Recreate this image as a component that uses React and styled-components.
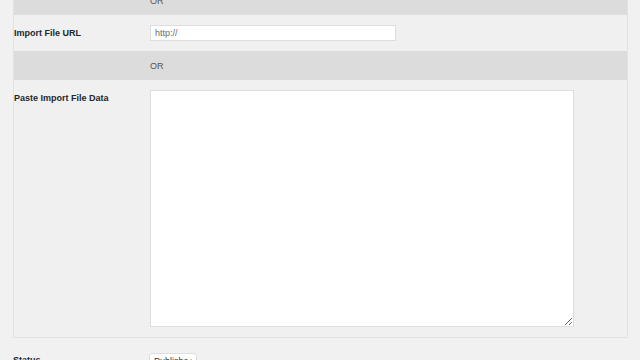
import React from 'react';
import styled, { createGlobalStyle } from 'styled-components';

const Global = createGlobalStyle`
  html, body {
    margin: 0;
    padding: 0;
    background: #f1f1f1;
    font-family: "Liberation Sans", Arial, sans-serif;
    color: #23282d;
    overflow: hidden;
  }
`;

const Page = styled.div`
  padding-left: 13px;
  width: 640px;
  height: 360px;
  box-sizing: border-box;
  overflow: hidden;
`;

const Panel = styled.div`
  width: 615px;
  margin-top: -15px;
  border: 1px solid #e2e2e2;
  background: #f0f0f0;
  box-sizing: border-box;
`;

const Band = styled.div`
  height: 29px;
  background: #dcdcdc;
  display: grid;
  grid-template-columns: 136px 1fr;
  align-items: center;
  font-size: 9px;
  color: #555;
  span { grid-column: 2; }
`;

const Row = styled.div`
  display: grid;
  grid-template-columns: 136px 1fr;
  align-items: ${p => (p.$top ? 'start' : 'center')};
  padding: 10px 0;
`;

const Field = styled.div`
  display: flex;
`;

const Label = styled.label`
  font-size: 9px;
  font-weight: bold;
  line-height: 11px;
  padding-top: ${p => p.$pad || 0}px;
`;

const TextInput = styled.input`
  width: 246px;
  height: 16px;
  box-sizing: border-box;
  border: 1px solid #dddddd;
  background: #fff;
  font-family: inherit;
  font-size: 9px;
  padding: 0 4px;
  margin: 0;
  outline: none;
  &::placeholder { color: #6b6b6b; }
`;

const Area = styled.textarea`
  width: 424px;
  height: 237px;
  box-sizing: border-box;
  border: 1px solid #dddddd;
  background: #fff;
  margin: 0;
  display: block;
  resize: both;
`;

const StatusRow = styled.div`
  display: grid;
  grid-template-columns: 136px 1fr;
  align-items: start;
  padding-top: 15px;
`;

const Select = styled.div`
  width: 48px;
  height: 20px;
  box-sizing: border-box;
  border: 1px solid #ddd;
  border-radius: 3px;
  background: #fff;
  font-size: 9px;
  padding: 2px 3px 0 4px;
  color: #333;
  display: flex;
  gap: 1px;
  span:first-child {
    overflow: hidden;
    white-space: nowrap;
  }
  span:last-child {
    flex-shrink: 0;
    font-size: 8px;
  }
`;

export default function App() {
  return (
    <Page>
      <Global />
      <Panel>
        <Band><span>OR</span></Band>
        <Row>
          <Label>Import File URL</Label>
          <Field><TextInput placeholder="http://" /></Field>
        </Row>
        <Band><span>OR</span></Band>
        <Row $top>
          <Label $pad={3}>Paste Import File Data</Label>
          <Field><Area /></Field>
        </Row>
      </Panel>
      <StatusRow>
        <Label $pad={2}>Status</Label>
        <Select><span>Published</span><span>▴</span></Select>
      </StatusRow>
    </Page>
  );
}
